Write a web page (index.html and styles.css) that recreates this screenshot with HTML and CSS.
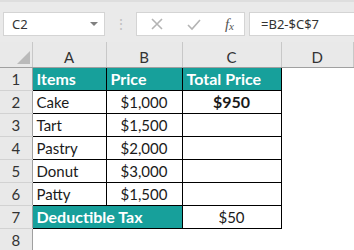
FILE: index.html
```html
<!DOCTYPE html>
<html lang="en">

<head>
    <meta charset="UTF-8">
    <title>Sheet</title>
    <link rel="stylesheet" href="styles.css">
</head>

<body>
    <div class="toolbar">
        <div class="namebox">
            <span>C2</span>
            <span class="caret"></span>
        </div>
        <div class="dots">&#8942;</div>
        <div class="icons">
            <svg width="14" height="14" viewBox="0 0 14 14"><path d="M2 2 L12 12 M12 2 L2 12" stroke="#b4b4b4" stroke-width="1.6" fill="none" /></svg>
            <svg width="16" height="14" viewBox="0 0 16 14"><path d="M2 8 L6 12 L14 3" stroke="#b4b4b4" stroke-width="1.6" fill="none" /></svg>
            <span class="fx">f<sub>x</sub></span>
        </div>
        <div class="formula">=B2-$C$7</div>
    </div>

    <table class="sheet">
        <colgroup>
            <col style="width: 32px">
            <col style="width: 74px">
            <col style="width: 76px">
            <col style="width: 99px">
            <col>
        </colgroup>
        <tr class="colhead">
            <th class="corner"><span class="tri"></span></th>
            <th>A</th>
            <th>B</th>
            <th>C</th>
            <th>D</th>
        </tr>
        <tr>
            <th class="rowhead">1</th>
            <td class="teal">Items</td>
            <td class="teal">Price</td>
            <td class="teal">Total Price</td>
            <td class="blank"></td>
        </tr>
        <tr>
            <th class="rowhead">2</th>
            <td>Cake</td>
            <td class="num">$1,000</td>
            <td class="num bold">$950</td>
            <td class="blank"></td>
        </tr>
        <tr>
            <th class="rowhead">3</th>
            <td>Tart</td>
            <td class="num">$1,500</td>
            <td></td>
            <td class="blank"></td>
        </tr>
        <tr>
            <th class="rowhead">4</th>
            <td>Pastry</td>
            <td class="num">$2,000</td>
            <td></td>
            <td class="blank"></td>
        </tr>
        <tr>
            <th class="rowhead">5</th>
            <td>Donut</td>
            <td class="num">$3,000</td>
            <td></td>
            <td class="blank"></td>
        </tr>
        <tr>
            <th class="rowhead">6</th>
            <td>Patty</td>
            <td class="num">$1,500</td>
            <td></td>
            <td class="blank"></td>
        </tr>
        <tr>
            <th class="rowhead">7</th>
            <td class="teal" colspan="2">Deductible Tax</td>
            <td class="num">$50</td>
            <td class="blank"></td>
        </tr>
        <tr>
            <th class="rowhead">8</th>
            <td class="blank"></td>
            <td class="blank"></td>
            <td class="blank"></td>
            <td class="blank"></td>
        </tr>
    </table>
</body>

</html>
```

FILE: styles.css
```css
* {
    box-sizing: border-box;
}

body {
    margin: 0;
    width: 354px;
    height: 250px;
    overflow: hidden;
    background-color: white;
    font-family: Lato, "Liberation Sans", sans-serif;
}

.toolbar {
    height: 42px;
    display: flex;
    align-items: flex-start;
    padding: 10px 0 0 3px;
    background-color: #eaeaea;
    border-top: 2px solid #dedede;
    font-family: "Noto Sans", sans-serif;
    font-size: 13px;
    color: #333;
}

.namebox {
    width: 102px;
    height: 24px;
    background-color: white;
    border: 1px solid #d4d4d4;
    display: flex;
    align-items: center;
    justify-content: space-between;
    padding: 0 6px 0 8px;
}

.caret {
    width: 0;
    height: 0;
    border-left: 4px solid transparent;
    border-right: 4px solid transparent;
    border-top: 4px solid #808080;
}

.dots {
    width: 31px;
    height: 24px;
    text-align: center;
    line-height: 24px;
    color: #c0c0c0;
    font-size: 14px;
}

.icons {
    width: 109px;
    height: 24px;
    background-color: white;
    border: 1px solid #d4d4d4;
    display: flex;
    align-items: center;
    justify-content: space-between;
    padding: 0 10px 0 13px;
}

.fx {
    font-family: "Liberation Serif", serif;
    font-style: italic;
    font-size: 15px;
    color: #555;
}

.fx sub {
    font-size: 11px;
    vertical-align: -1px;
}

.formula {
    margin-left: 4px;
    flex: 1;
    height: 24px;
    background-color: white;
    border: 1px solid #d4d4d4;
    border-right: none;
    padding-left: 11px;
    line-height: 22px;
}

.sheet {
    border-collapse: collapse;
    table-layout: fixed;
    width: 100%;
    font-size: 15px;
    color: #1a1a1a;
}

.sheet th {
    font-weight: normal;
    background-color: #e9e9e9;
    color: #333;
}

.colhead th {
    height: 25px;
    border-right: 1px solid #c8c8c8;
    border-bottom: 1px solid #a0a0a0;
    padding: 0;
    vertical-align: bottom;
    padding-bottom: 1px;
}

.corner {
    position: relative;
}

.tri {
    position: absolute;
    right: 2px;
    bottom: 3px;
    width: 0;
    height: 0;
    border-left: 13px solid transparent;
    border-bottom: 13px solid #bababa;
}

.rowhead {
    height: 23px;
    border-right: 1px solid #a0a0a0;
    border-bottom: 1px solid #d2d2d2;
    padding: 0;
}

.sheet td {
    height: 23px;
    border: 1px solid black;
    padding: 0 4px;
    white-space: nowrap;
    overflow: hidden;
}

.sheet td.blank {
    border: none;
}

.teal {
    background-color: #17a09b;
    color: white;
    font-weight: bold;
    font-size: 16px;
}

.num {
    text-align: center;
}

.bold {
    font-weight: bold;
    font-size: 16px;
}
```
